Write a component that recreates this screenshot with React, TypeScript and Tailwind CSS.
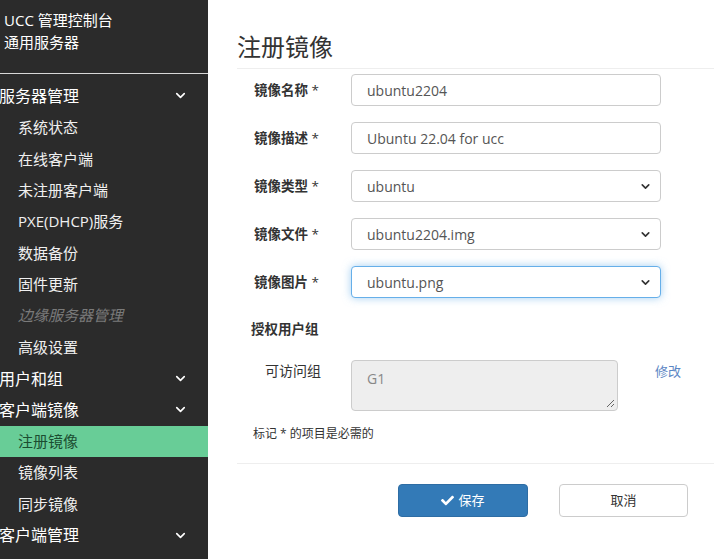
import React from "react";
import { ChevronDown } from "lucide-react";
import { FaCheck } from "react-icons/fa";

const FONT = { fontFamily: '"Open Sans", "Noto Sans CJK SC", sans-serif' };

type Item = { label: string; kind: "top" | "sub" | "disabled" | "active" };

const items: Item[] = [
  { label: "服务器管理", kind: "top" },
  { label: "系统状态", kind: "sub" },
  { label: "在线客户端", kind: "sub" },
  { label: "未注册客户端", kind: "sub" },
  { label: "PXE(DHCP)服务", kind: "sub" },
  { label: "数据备份", kind: "sub" },
  { label: "固件更新", kind: "sub" },
  { label: "边缘服务器管理", kind: "disabled" },
  { label: "高级设置", kind: "sub" },
  { label: "用户和组", kind: "top" },
  { label: "客户端镜像", kind: "top" },
  { label: "注册镜像", kind: "active" },
  { label: "镜像列表", kind: "sub" },
  { label: "同步镜像", kind: "sub" },
  { label: "客户端管理", kind: "top" },
];

function SideRow({ item }: { item: Item }) {
  if (item.kind === "top") {
    return (
      <div className="h-[31.4px] flex items-center justify-between pr-[20px]">
        <span className="-ml-[1px] text-[16px] text-white">{item.label}</span>
        <ChevronDown size={15} strokeWidth={2.6} className="text-white" />
      </div>
    );
  }
  if (item.kind === "active") {
    return (
      <div className="h-[31.4px] flex items-center pl-[18px] bg-[#68cd97]">
        <span className="text-[15px] text-[#1b4d31]">{item.label}</span>
      </div>
    );
  }
  if (item.kind === "disabled") {
    return (
      <div className="h-[31.4px] flex items-center pl-[18px]">
        <span className="text-[15px] italic text-[#7a7a7a]">{item.label}</span>
      </div>
    );
  }
  return (
    <div className="h-[31.4px] flex items-center pl-[18px]">
      <span className="text-[15px] text-[#f0f0f0]">{item.label}</span>
    </div>
  );
}

function Row({ label, children }: { label: string; children: React.ReactNode }) {
  return (
    <div className="flex items-center h-[32px] mb-[16px]">
      <div className="w-[114px] pl-[17px] text-[13.5px] font-bold text-[#333]">
        {label} <span className="font-normal">*</span>
      </div>
      {children}
    </div>
  );
}

function SelectBox({ value, focus }: { value: string; focus?: boolean }) {
  return (
    <div
      className={
        focus
          ? "w-[310px] h-[32px] rounded-[4px] border border-[#66afe9] shadow-[0_0_8px_rgba(102,175,233,0.6)] bg-white flex items-center justify-between pl-[15px] pr-[8px]"
          : "w-[310px] h-[32px] rounded-[4px] border border-[#ccc] bg-white flex items-center justify-between pl-[15px] pr-[8px]"
      }
    >
      <span className="text-[14px] text-[#555]">{value}</span>
      <ChevronDown size={13} strokeWidth={3} className="text-[#333]" />
    </div>
  );
}

function InputBox({ value }: { value: string }) {
  return (
    <div className="w-[310px] h-[32px] rounded-[4px] border border-[#ccc] bg-white flex items-center pl-[15px]">
      <span className="text-[14px] text-[#555]">{value}</span>
    </div>
  );
}

export default function App() {
  return (
    <div className="flex w-[714px] h-[559px] overflow-hidden bg-white" style={FONT}>
      <div className="w-[208px] shrink-0 h-full bg-[#2b2b2b] overflow-hidden">
        <div className="h-[74px] border-b border-[#d8d8d8] pt-[9px] pl-[4px] text-[15px] leading-[22px] text-white">
          <div>UCC 管理控制台</div>
          <div>通用服务器</div>
        </div>
        <div className="pt-[6.3px]">
          {items.map((it) => (
            <SideRow key={it.label} item={it} />
          ))}
        </div>
      </div>

      <div className="flex-1 pl-[29px]">
        <div className="pt-[31px] pb-[5px] border-b border-[#eee]">
          <div className="text-[24px] leading-[32px] text-[#333]">注册镜像</div>
        </div>
        <div className="pt-[5px]">
          <Row label="镜像名称">
            <InputBox value="ubuntu2204" />
          </Row>
          <Row label="镜像描述">
            <InputBox value="Ubuntu 22.04 for ucc" />
          </Row>
          <Row label="镜像类型">
            <SelectBox value="ubuntu" />
          </Row>
          <Row label="镜像文件">
            <SelectBox value="ubuntu2204.img" />
          </Row>
          <Row label="镜像图片">
            <SelectBox value="ubuntu.png" focus />
          </Row>

          <div className="mt-[21px] pl-[14px] h-[20px] leading-[20px] text-[13.5px] font-bold text-[#333]">
            授权用户组
          </div>

          <div className="mt-[21px] flex items-start">
            <div className="w-[114px] pl-[28px] text-[14px] leading-[22px] text-[#333]">可访问组</div>
            <div className="relative w-[267px] h-[51px] rounded-[4px] border border-[#ccc] bg-[#eee] pl-[15px] pt-[5px]">
              <span className="text-[14px] leading-[22px] text-[#888]">G1</span>
              <svg
                className="absolute right-[2px] bottom-[2px]"
                width="9"
                height="9"
                viewBox="0 0 9 9"
              >
                <line x1="1" y1="8" x2="8" y2="1" stroke="#666" strokeWidth="1" />
                <line x1="5" y1="8" x2="8" y2="5" stroke="#666" strokeWidth="1" />
              </svg>
            </div>
            <div className="ml-[37px] text-[13px] leading-[22px] text-[#5b86c4]">修改</div>
          </div>

          <div className="mt-[13px] pl-[16px] h-[20px] leading-[20px] text-[12px] text-[#333]">
            标记 * 的项目是必需的
          </div>
        </div>
        <div className="mt-[19px] border-b border-[#eee]" />
        <div className="mt-[20px] flex">
          <div className="ml-[161px] w-[130px] h-[33px] rounded-[4px] bg-[#337ab7] border border-[#2e6da4] flex items-center justify-center gap-[4px] text-white text-[13px]">
            <FaCheck size={13} />
            <span>保存</span>
          </div>
          <div className="ml-[31px] w-[129px] h-[33px] rounded-[4px] bg-white border border-[#ccc] flex items-center justify-center text-[#333] text-[13px]">
            取消
          </div>
        </div>
      </div>
    </div>
  );
}
